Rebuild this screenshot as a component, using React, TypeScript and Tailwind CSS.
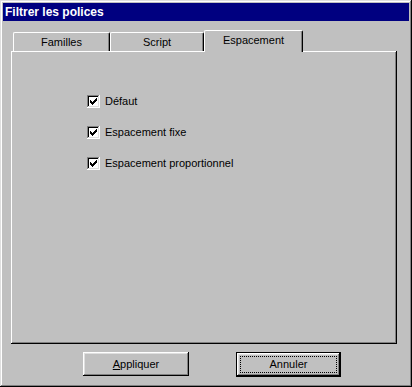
import React from "react";

const font = { fontFamily: '"Liberation Sans", Arial, sans-serif' };

function CheckMark() {
  // classic 7x7 pixel check
  const rows = [
    "......#",
    ".....##",
    "#...###",
    "##.###.",
    "#####..",
    ".###...",
    "..#....",
  ];
  return (
    <svg width="7" height="7" viewBox="0 0 7 7" shapeRendering="crispEdges">
      {rows.flatMap((r, y) =>
        r.split("").map((c, x) => (c === "#" ? <rect key={`${x}-${y}`} x={x} y={y} width="1" height="1" fill="#000" /> : null))
      )}
    </svg>
  );
}

function Check({ label }: { label: string }) {
  return (
    <div className="flex items-center gap-[5px] h-[13px]">
      <div className="w-[13px] h-[13px] bg-white flex items-center justify-center shadow-[inset_-1px_-1px_#fff,inset_1px_1px_#808080,inset_-2px_-2px_#dfdfdf,inset_2px_2px_#000]">
        <CheckMark />
      </div>
      <span className="text-[11px] leading-none text-black">{label}</span>
    </div>
  );
}

export default function App() {
  return (
    <div
      className="w-[412px] h-[387px] bg-[#c0c0c0] p-[3px] flex flex-col shadow-[inset_-1px_-1px_#000,inset_1px_1px_#dfdfdf,inset_-2px_-2px_#808080,inset_2px_2px_#fff]"
      style={font}
    >
      {/* Title bar */}
      <div className="h-[18px] bg-[#000080] flex items-center px-[2px]">
        <span className="text-white font-bold text-[12px] leading-none">Filtrer les polices</span>
      </div>

      {/* Tabs + panel */}
      <div className="ml-[8px] mt-[9px] flex flex-col">
        <div className="relative z-10 flex items-end pl-[2px]">
          <div className="w-[97px] h-[19px] border-l border-t border-r border-l-white border-t-white border-r-black rounded-t-[2px] shadow-[inset_-1px_0_#808080] flex items-center justify-center text-[11px] leading-none text-black">
            Familles
          </div>
          <div className="w-[94px] h-[19px] border-l border-t border-r border-l-white border-t-white border-r-black rounded-t-[2px] shadow-[inset_-1px_0_#808080] flex items-center justify-center text-[11px] leading-none text-black">
            Script
          </div>
          <div className="w-[99px] h-[22px] -mb-[1px] bg-[#c0c0c0] border-l border-t border-r border-l-white border-t-white border-r-black rounded-t-[2px] shadow-[inset_-1px_0_#808080] flex items-center justify-center pb-[2px] text-[11px] leading-none text-black">
            Espacement
          </div>
        </div>
        <div className="w-[386px] h-[293px] pt-[44px] pl-[76px] flex flex-col gap-[18px] shadow-[inset_-1px_-1px_#000,inset_1px_1px_#fff,inset_-2px_-2px_#808080]">
          <Check label="Défaut" />
          <Check label="Espacement fixe" />
          <Check label="Espacement proportionnel" />
        </div>
      </div>

      {/* Buttons */}
      <div className="mt-[8px] pl-[80px] flex gap-[47px]">
        <div className="w-[106px] h-[24px] flex items-center justify-center text-[11px] leading-none text-black shadow-[inset_-1px_-1px_#000,inset_1px_1px_#fff,inset_-2px_-2px_#808080,inset_2px_2px_#dfdfdf]">
          <span>
            <span className="underline">A</span>ppliquer
          </span>
        </div>
        <div className="w-[105px] h-[25px] border border-black shadow-[inset_-1px_-1px_#000,inset_1px_1px_#fff,inset_-2px_-2px_#808080,inset_2px_2px_#dfdfdf] p-[3px]">
          <div className="w-full h-full border border-dotted border-black flex items-center justify-center text-[11px] leading-none text-black">
            Annuler
          </div>
        </div>
      </div>
    </div>
  );
}
